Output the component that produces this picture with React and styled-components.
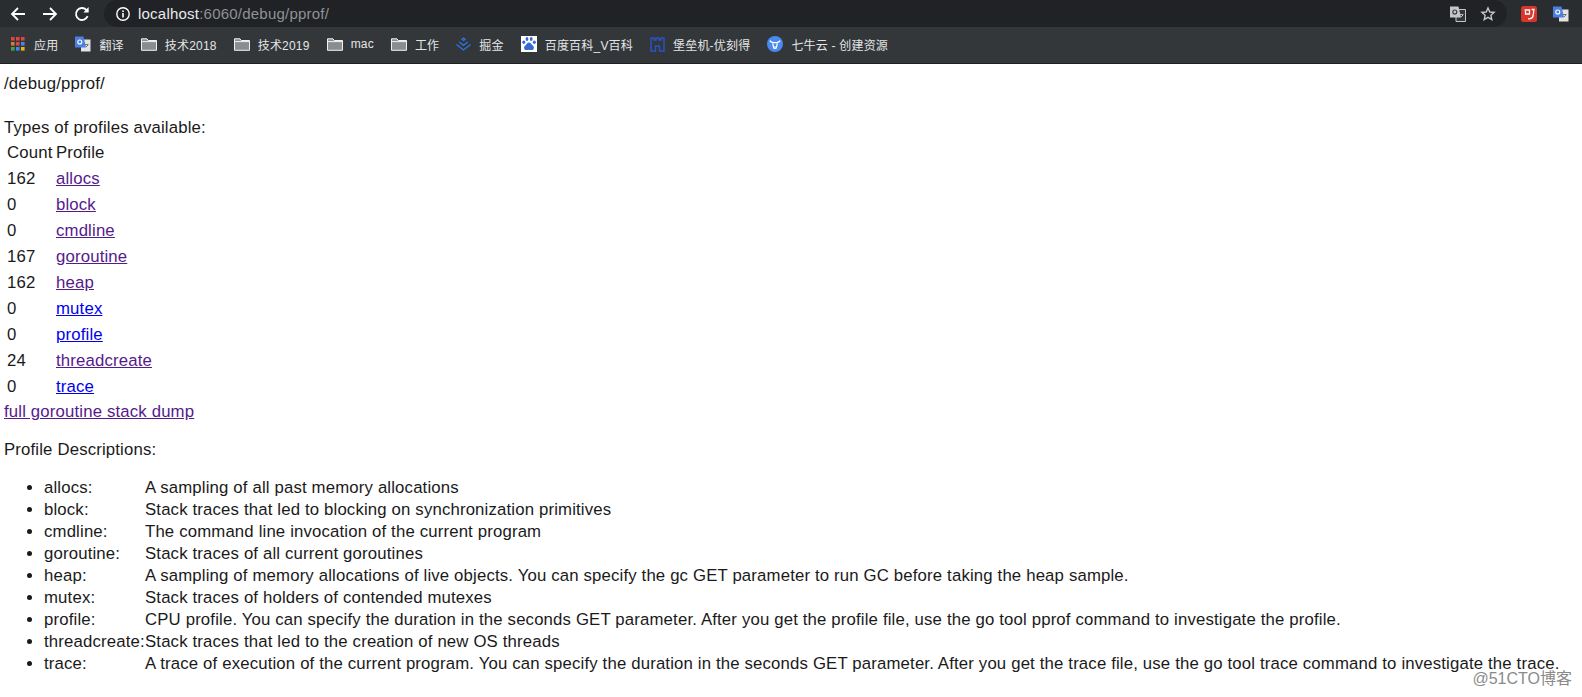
import React from 'react';
import styled, {createGlobalStyle} from 'styled-components';

const GlobalStyle = createGlobalStyle`
  html, body {
    margin: 0;
    padding: 0;
    background: #fff;
    overflow: hidden;
  }
  body {
    font-family: "Liberation Sans", Arial, sans-serif;
    color: #1a1a1a;
  }
`

const bookmarks = [
  {icon: 'apps', label: '应用'},
  {icon: 'translate', label: '翻译'},
  {icon: 'folder', label: '技术2018'},
  {icon: 'folder', label: '技术2019'},
  {icon: 'folder', label: 'mac'},
  {icon: 'folder', label: '工作'},
  {icon: 'juejin', label: '掘金'},
  {icon: 'baidu', label: '百度百科_V百科'},
  {icon: 'castle', label: '堡垒机-优刻得'},
  {icon: 'qiniu', label: '七牛云 - 创建资源'}
]

const profiles = [
  {count: 162, name: 'allocs', visited: true},
  {count: 0, name: 'block', visited: true},
  {count: 0, name: 'cmdline', visited: true},
  {count: 167, name: 'goroutine', visited: true},
  {count: 162, name: 'heap', visited: true},
  {count: 0, name: 'mutex'},
  {count: 0, name: 'profile'},
  {count: 24, name: 'threadcreate', visited: true},
  {count: 0, name: 'trace'}
]

const descriptions = [
  ['allocs:', 'A sampling of all past memory allocations'],
  ['block:', 'Stack traces that led to blocking on synchronization primitives'],
  ['cmdline:', 'The command line invocation of the current program'],
  ['goroutine:', 'Stack traces of all current goroutines'],
  ['heap:', 'A sampling of memory allocations of live objects. You can specify the gc GET parameter to run GC before taking the heap sample.'],
  ['mutex:', 'Stack traces of holders of contended mutexes'],
  ['profile:', 'CPU profile. You can specify the duration in the seconds GET parameter. After you get the profile file, use the go tool pprof command to investigate the profile.'],
  ['threadcreate:', 'Stack traces that led to the creation of new OS threads'],
  ['trace:', 'A trace of execution of the current program. You can specify the duration in the seconds GET parameter. After you get the trace file, use the go tool trace command to investigate the trace.']
]

const Page = styled.div`
  width: 1582px;
  height: 697px;
  position: relative;
  overflow: hidden;
`
const Toolbar = styled.div`
  height: 27px;
  background: #2a2d30;
  display: flex;
  align-items: center;
`
const NavButtons = styled.div`
  display: flex;
  align-items: center;
  gap: 16px;
  padding-left: 10px;
  width: 104px;
  box-sizing: border-box;
`
const Omnibox = styled.div`
  width: 1403px;
  height: 27px;
  background: #202225;
  border-radius: 14px;
  display: flex;
  align-items: center;
  padding-left: 11px;
  box-sizing: border-box;
`
const Url = styled.span`
  margin-left: 7px;
  font-size: 15px;
  letter-spacing: 0.22px;
  color: #e8eaed;
`
const UrlRest = styled.span`
  color: #8f9296;
`
const OmniActions = styled.div`
  margin-left: auto;
  display: flex;
  align-items: center;
  gap: 14px;
  padding-right: 11px;
`
const Extensions = styled.div`
  display: flex;
  align-items: center;
  gap: 16px;
  margin-left: 14px;
`
const BookmarkBar = styled.div`
  height: 37px;
  padding: 0 0 2px 11px;
  box-sizing: border-box;
  background: #33373a;
  border-bottom: 1px solid #1f2123;
  display: flex;
  align-items: center;
`
const Bookmark = styled.div`
  display: flex;
  align-items: center;
  gap: 8px;
  margin-right: 17px;
  font-size: 12px;
  letter-spacing: 0.2px;
  color: #e3e5e7;
  font-family: "Liberation Sans", "Noto Sans CJK SC", sans-serif;
  white-space: nowrap;
`
const Content = styled.div`
  padding: 11px 0 0 4px;
  font-size: 16.75px;
  line-height: 18px;
  letter-spacing: 0.16px;
`
const Title = styled.div`
  margin-bottom: 26px;
`
const ProfileTable = styled.table`
  margin-top: 7px;
  border-spacing: 0;
  border-collapse: collapse;
`
const HeadCell = styled.td`
  padding: 0 0 8px 3px;
  height: 18px;
  font-weight: normal;
`
const CountCell = styled.td`
  padding: 0 0 8px 3px;
  width: 46px;
`
const NameCell = styled.td`
  padding: 0 0 8px 3px;
`
const ProfileLink = styled.a`
  color: ${props => props.$visited ? '#551a8b' : '#0000ee'};
  text-decoration: underline;
`
const DumpLink = styled.div`
  margin-top: -1px;
`
const SectionTitle = styled.p`
  margin: 20px 0 0;
`
const DescList = styled.ul`
  margin: 18px 0 0;
  padding: 0 0 0 40px;
`
const DescItem = styled.li`
  line-height: 22px;
  white-space: nowrap;
`
const DescName = styled.span`
  display: inline-block;
  width: 101px;
`
const Watermark = styled.div`
  position: absolute;
  right: 10px;
  bottom: 11px;
  font-size: 16px;
  line-height: 14px;
  color: #8a8a8a;
  font-family: "Liberation Sans", "Noto Sans CJK SC", sans-serif;
  text-shadow: 0 0 1px #fff;
`

const BackIcon = () => (
  <svg width="16" height="16" viewBox="0 0 16 16" fill="none" stroke="#fff" strokeWidth="1.8">
    <path d="M15 8H2M8 2L2 8l6 6" />
  </svg>
)
const ForwardIcon = () => (
  <svg width="16" height="16" viewBox="0 0 16 16" fill="none" stroke="#fff" strokeWidth="1.8">
    <path d="M1 8h13M8 2l6 6-6 6" />
  </svg>
)
const ReloadIcon = () => (
  <svg width="16" height="16" viewBox="0 0 16 16" fill="none" stroke="#fff" strokeWidth="1.8">
    <path d="M13.6 10.2A6 6 0 1 1 12.3 3.8L14 5.6" />
    <path d="M14.6 1v5.4H9.4z" fill="#fff" stroke="none" />
  </svg>
)
const InfoIcon = () => (
  <svg width="16" height="16" viewBox="0 0 16 16" fill="none">
    <circle cx="8" cy="8" r="6.2" stroke="#fff" strokeWidth="1.4" />
    <rect x="7.2" y="7" width="1.6" height="4.5" fill="#fff" />
    <rect x="7.2" y="4.4" width="1.6" height="1.6" fill="#fff" />
  </svg>
)
const StarIcon = () => (
  <svg width="16" height="16" viewBox="0 0 16 16" fill="none" stroke="#c6c8ca" strokeWidth="1.4">
    <path d="M8 2l1.8 4 4.3.4-3.2 2.9.9 4.3L8 11.4l-3.8 2.2.9-4.3-3.2-2.9 4.3-.4z" />
  </svg>
)
const TranslateIcon = ({grey}) => (
  <svg width="16" height="16" viewBox="0 0 16 16">
    <path d="M6 3.5h9.500v12H6z" fill={grey ? '#33373a' : '#e3e3e3'} stroke={grey ? '#c4c6c8' : 'none'} />
    <path d="M0 .5h8.500l2.500 11H0z" fill={grey ? '#c4c6c8' : '#4b7fe0'} />
    <circle cx="4.8" cy="6" r="2" fill="none" stroke={grey ? '#33373a' : '#fff'} strokeWidth="1.1" />
    <path d="M10 8.500h3.500M11 11l2-2" stroke={grey ? '#c4c6c8' : '#666'} strokeWidth="0.9" />
  </svg>
)
const ExtensionRed = () => (
  <svg width="16" height="16" viewBox="0 0 16 16" fill="none">
    <rect width="16" height="16" rx="2.5" fill="#d9352c" />
    <path d="M3.500 4h5v4h-4V5M10.500 3.500h2.500L12 10c-.4 1.800-2 3-5 2.800" stroke="#fff" strokeWidth="1.3" />
  </svg>
)
const AppsIcon = () => {
  const colors = ['#d9483b', '#d9483b', '#d9483b', '#db7a2e', '#d9483b', '#4285f4', '#34a853', '#4285f4', '#f4b400']
  return (
    <svg width="15" height="14" viewBox="0 0 15 14">
      {colors.map((c, i) => <rect key={i} x={(i % 3) * 5} y={Math.floor(i / 3) * 5} width="3.6" height="3.6" fill={c} />)}
    </svg>
  )
}
const FolderIcon = () => (
  <svg width="16" height="13" viewBox="0 0 16 13" fill="#8a8d90" stroke="#f1f1f1" strokeWidth="1">
    <path d="M.5.8h5.500l1.200 1.700h8.300v9.800H.5z" />
    <path d="M.5 3.6h15" fill="none" />
  </svg>
)
const JuejinIcon = () => (
  <svg width="15" height="14" viewBox="0 0 15 14" fill="none" stroke="#2f72e6" strokeWidth="1.3">
    <path d="M7.500 1L9 2.200 7.500 3.400 6 2.200zM3.300 5l4.200 3.300L11.700 5M.5 7.500l7 5.500 7-5.500" />
  </svg>
)
const BaiduIcon = () => (
  <svg width="16" height="16" viewBox="0 0 16 16">
    <rect width="16" height="16" fill="#fff" />
    <g fill="#3569d6">
      <ellipse cx="2.8" cy="6.2" rx="1.5" ry="1.8" />
      <ellipse cx="6" cy="3" rx="1.4" ry="2" />
      <ellipse cx="10.2" cy="3" rx="1.4" ry="2" />
      <ellipse cx="13.3" cy="6.2" rx="1.5" ry="1.8" />
      <path d="M8 6.500c2 0 2.400 2 4 3.200 1.600 1.200 1 4.600-1.600 4.400-1-.1-1.600-.4-2.400-.4s-1.400.3-2.400.4C3 14.300 2.400 10.900 4 9.700c1.600-1.200 2-3.200 4-3.200z" />
    </g>
  </svg>
)
const CastleIcon = () => (
  <svg width="15" height="15" viewBox="0 0 15 15" fill="none" stroke="#2a53c9" strokeWidth="1.4">
    <path d="M1 1h3v2h2V1h3v2h2V1h3v13H9.500V9h-4v5H1z" />
  </svg>
)
const QiniuIcon = () => (
  <svg width="16" height="16" viewBox="0 0 16 16" fill="none">
    <circle cx="8" cy="8" r="8" fill="#4a8af0" />
    <path d="M3 4.500c.6 1.800 2.300 2.200 5 2.200s4.400-.4 5-2.200M5.700 7.500l.8 3.500h3l.8-3.500M6.500 11l.6 1.500h1.800l.6-1.500" stroke="#fff" strokeWidth="1.2" />
  </svg>
)

const icons = {
  apps: <AppsIcon />,
  translate: <TranslateIcon />,
  folder: <FolderIcon />,
  juejin: <JuejinIcon />,
  baidu: <BaiduIcon />,
  castle: <CastleIcon />,
  qiniu: <QiniuIcon />
}

export default function App() {
  return (
    <Page>
      <GlobalStyle />
      <Toolbar>
        <NavButtons>
          <BackIcon />
          <ForwardIcon />
          <ReloadIcon />
        </NavButtons>
        <Omnibox>
          <InfoIcon />
          <Url>localhost<UrlRest>:6060/debug/pprof/</UrlRest></Url>
          <OmniActions>
            <TranslateIcon grey />
            <StarIcon />
          </OmniActions>
        </Omnibox>
        <Extensions>
          <ExtensionRed />
          <TranslateIcon />
        </Extensions>
      </Toolbar>
      <BookmarkBar>
        {bookmarks.map(item => (
          <Bookmark key={item.label}>
            {icons[item.icon]}
            {item.label}
          </Bookmark>
        ))}
      </BookmarkBar>
      <Content>
        <Title>/debug/pprof/</Title>
        <div>Types of profiles available:</div>
        <ProfileTable>
          <thead>
            <tr>
              <HeadCell>Count</HeadCell>
              <HeadCell>Profile</HeadCell>
            </tr>
          </thead>
          <tbody>
            {profiles.map(p => (
              <tr key={p.name}>
                <CountCell>{p.count}</CountCell>
                <NameCell><ProfileLink href="#" $visited={p.visited}>{p.name}</ProfileLink></NameCell>
              </tr>
            ))}
          </tbody>
        </ProfileTable>
        <DumpLink><ProfileLink href="#" $visited>full goroutine stack dump</ProfileLink></DumpLink>
        <SectionTitle>Profile Descriptions:</SectionTitle>
        <DescList>
          {descriptions.map(([name, text]) => (
            <DescItem key={name}><DescName>{name}</DescName>{text}</DescItem>
          ))}
        </DescList>
      </Content>
      <Watermark>@51CTO博客</Watermark>
    </Page>
  );
}
